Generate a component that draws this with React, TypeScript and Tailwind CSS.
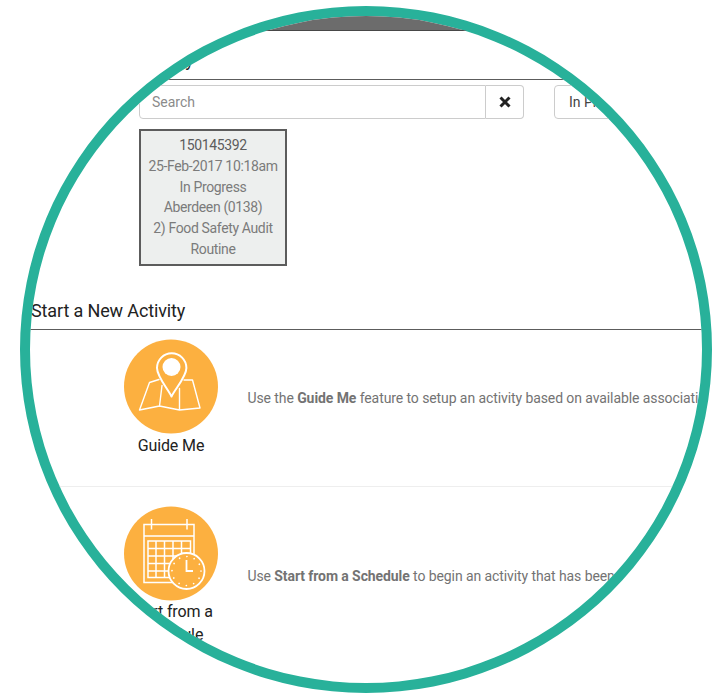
import React from "react";

function GuideIcon() {
  return (
    <svg className="mb-px block h-[94px] w-[94px] shrink-0" viewBox="0 -0.5 94 94" fill="none" stroke="#fff" strokeLinejoin="round" strokeLinecap="round" overflow="visible">
      <circle cx="47" cy="47" r="47" fill="#fcb040" stroke="none" />
      <path d="M35 40 25.500 43 15.500 70.500 35.500 66.500 55.500 70.500 76 68.500 68.500 40.500H60M38 46 35.500 66.500M55.500 49V70.500" strokeWidth="1.400" />
      <path d="M47.500 57C43.500 49 33 37 33 28.500A14.700 14.700 0 0 1 62.400 28.500C62.400 37 51.500 49 47.500 57Z" fill="#fcb040" strokeWidth="2" />
      <circle cx="47.500" cy="27.500" r="9" fill="#fff" stroke="none" />
    </svg>
  );
}

function ScheduleIcon() {
  return (
    <svg className="block h-[94px] w-[94px] shrink-0" viewBox="0 -0.5 94 94" fill="none" stroke="#fff" strokeWidth="1.500" overflow="visible">
      <circle cx="47" cy="47" r="47" fill="#fcb040" stroke="none" />
      <path d="M20 18H70V76H20ZM20 29.500H70M27.500 12.500V23M63 12.500V23M24 34.500H66.500V71H24ZM24 42H66.500M24 49.500H66.500M24 57H66.500M24 64.500H66.500M32 34.500V71M40.500 34.500V71M49 34.500V71M57.500 34.500V71" />
      <circle cx="62.500" cy="64.500" r="18" fill="#fcb040" strokeWidth="1.800" />
      <path d="M62.500 53.500V64.500H69" strokeWidth="1.800" />
      <circle cx="62.500" cy="64.500" r="14.500" strokeWidth="1.700" strokeLinecap="round" strokeDasharray="0.010 7.582" />
    </svg>
  );
}

function Activity({ icon, label, children }: { icon: React.ReactNode; label: string; children: React.ReactNode }) {
  return (
    <div className="flex">
      <div className="ml-[94px] flex w-[94px] shrink-0 flex-col items-center">
        {icon}
        <div className="w-[94px] text-center text-[16px] leading-[23px] tracking-[-0.1px] text-[#222]">{label}</div>
      </div>
      <p className="ml-[29.500px] shrink-0 whitespace-nowrap text-[14px] leading-5 tracking-[-0.090px] text-[#737373]">{children}</p>
    </div>
  );
}

export default function App() {
  return (
    <div className="h-[700px] w-[727px] overflow-hidden bg-white pl-[20px] pt-[6px] font-['Roboto',sans-serif]">
      <main className="h-[687px] w-[692px] overflow-hidden rounded-[50%] border-[10px] border-[#28b19a] bg-white">
        <div className="h-[15px] border-b border-[#484848] bg-[#6c6c6c]" />
        <h2 className="mt-[18px] h-[31px] border-b border-[#5c5c5c] pl-[11px] text-[18px] leading-[21px] text-[#222]">Resume an Activity</h2>
        <div className="ml-[109px] mt-[5px] flex h-[34px] w-[600px] text-[14px]">
          <input aria-label="Search" placeholder="Search" className="h-full w-[347px] rounded-l-[4px] border border-[#ccc] px-3 text-[#555] placeholder:text-[#8b8b8b]" />
          <button className="flex h-full w-[38px] items-center justify-center rounded-r-[4px] border border-l-0 border-[#ccc]">
            <svg className="h-[12px] w-[12px]" viewBox="0 0 12 12" stroke="#222" strokeWidth="3"><path d="M1.500 1.500 10.500 10.500M10.500 1.500 1.500 10.500" /></svg>
          </button>
          <button className="ml-[30px] h-full w-[150px] rounded-[4px] border border-[#ccc] px-[14px] text-left text-[#444]">In Progress</button>
        </div>
        <div className="ml-[109px] mt-[10px] h-[137px] w-[148px] border-2 border-[#5c5c5c] bg-[#edefee] pt-[4px] text-center text-[14px] leading-[20.800px] tracking-[-0.360px] text-[#7b7b7b]">
          <div className="text-[#5c5c5c]">150145392</div>
          <div>25-Feb-2017 10:18am</div>
          <div>In Progress</div>
          <div>Aberdeen (0138)</div>
          <div>2) Food Safety Audit</div>
          <div>Routine</div>
        </div>
        <h2 className="mt-[34px] h-[30px] border-b border-[#5c5c5c] pl-px text-[18px] leading-[21px] tracking-[-0.130px] text-[#222]">Start a New Activity</h2>
        <div className="h-[157px] border-b border-[#eee] pt-[9px]">
          <Activity icon={<GuideIcon />} label="Guide Me">
            <span className="mt-[49px] block">Use the <b>Guide Me</b> feature to setup an activity based on available associations</span>
          </Activity>
        </div>
        <div className="pt-[19px]">
          <Activity icon={<ScheduleIcon />} label="Start from a Schedule">
            <span className="mt-[60px] block">Use <b>Start from a Schedule</b> to begin an activity that has been scheduled</span>
          </Activity>
        </div>
      </main>
    </div>
  );
}
